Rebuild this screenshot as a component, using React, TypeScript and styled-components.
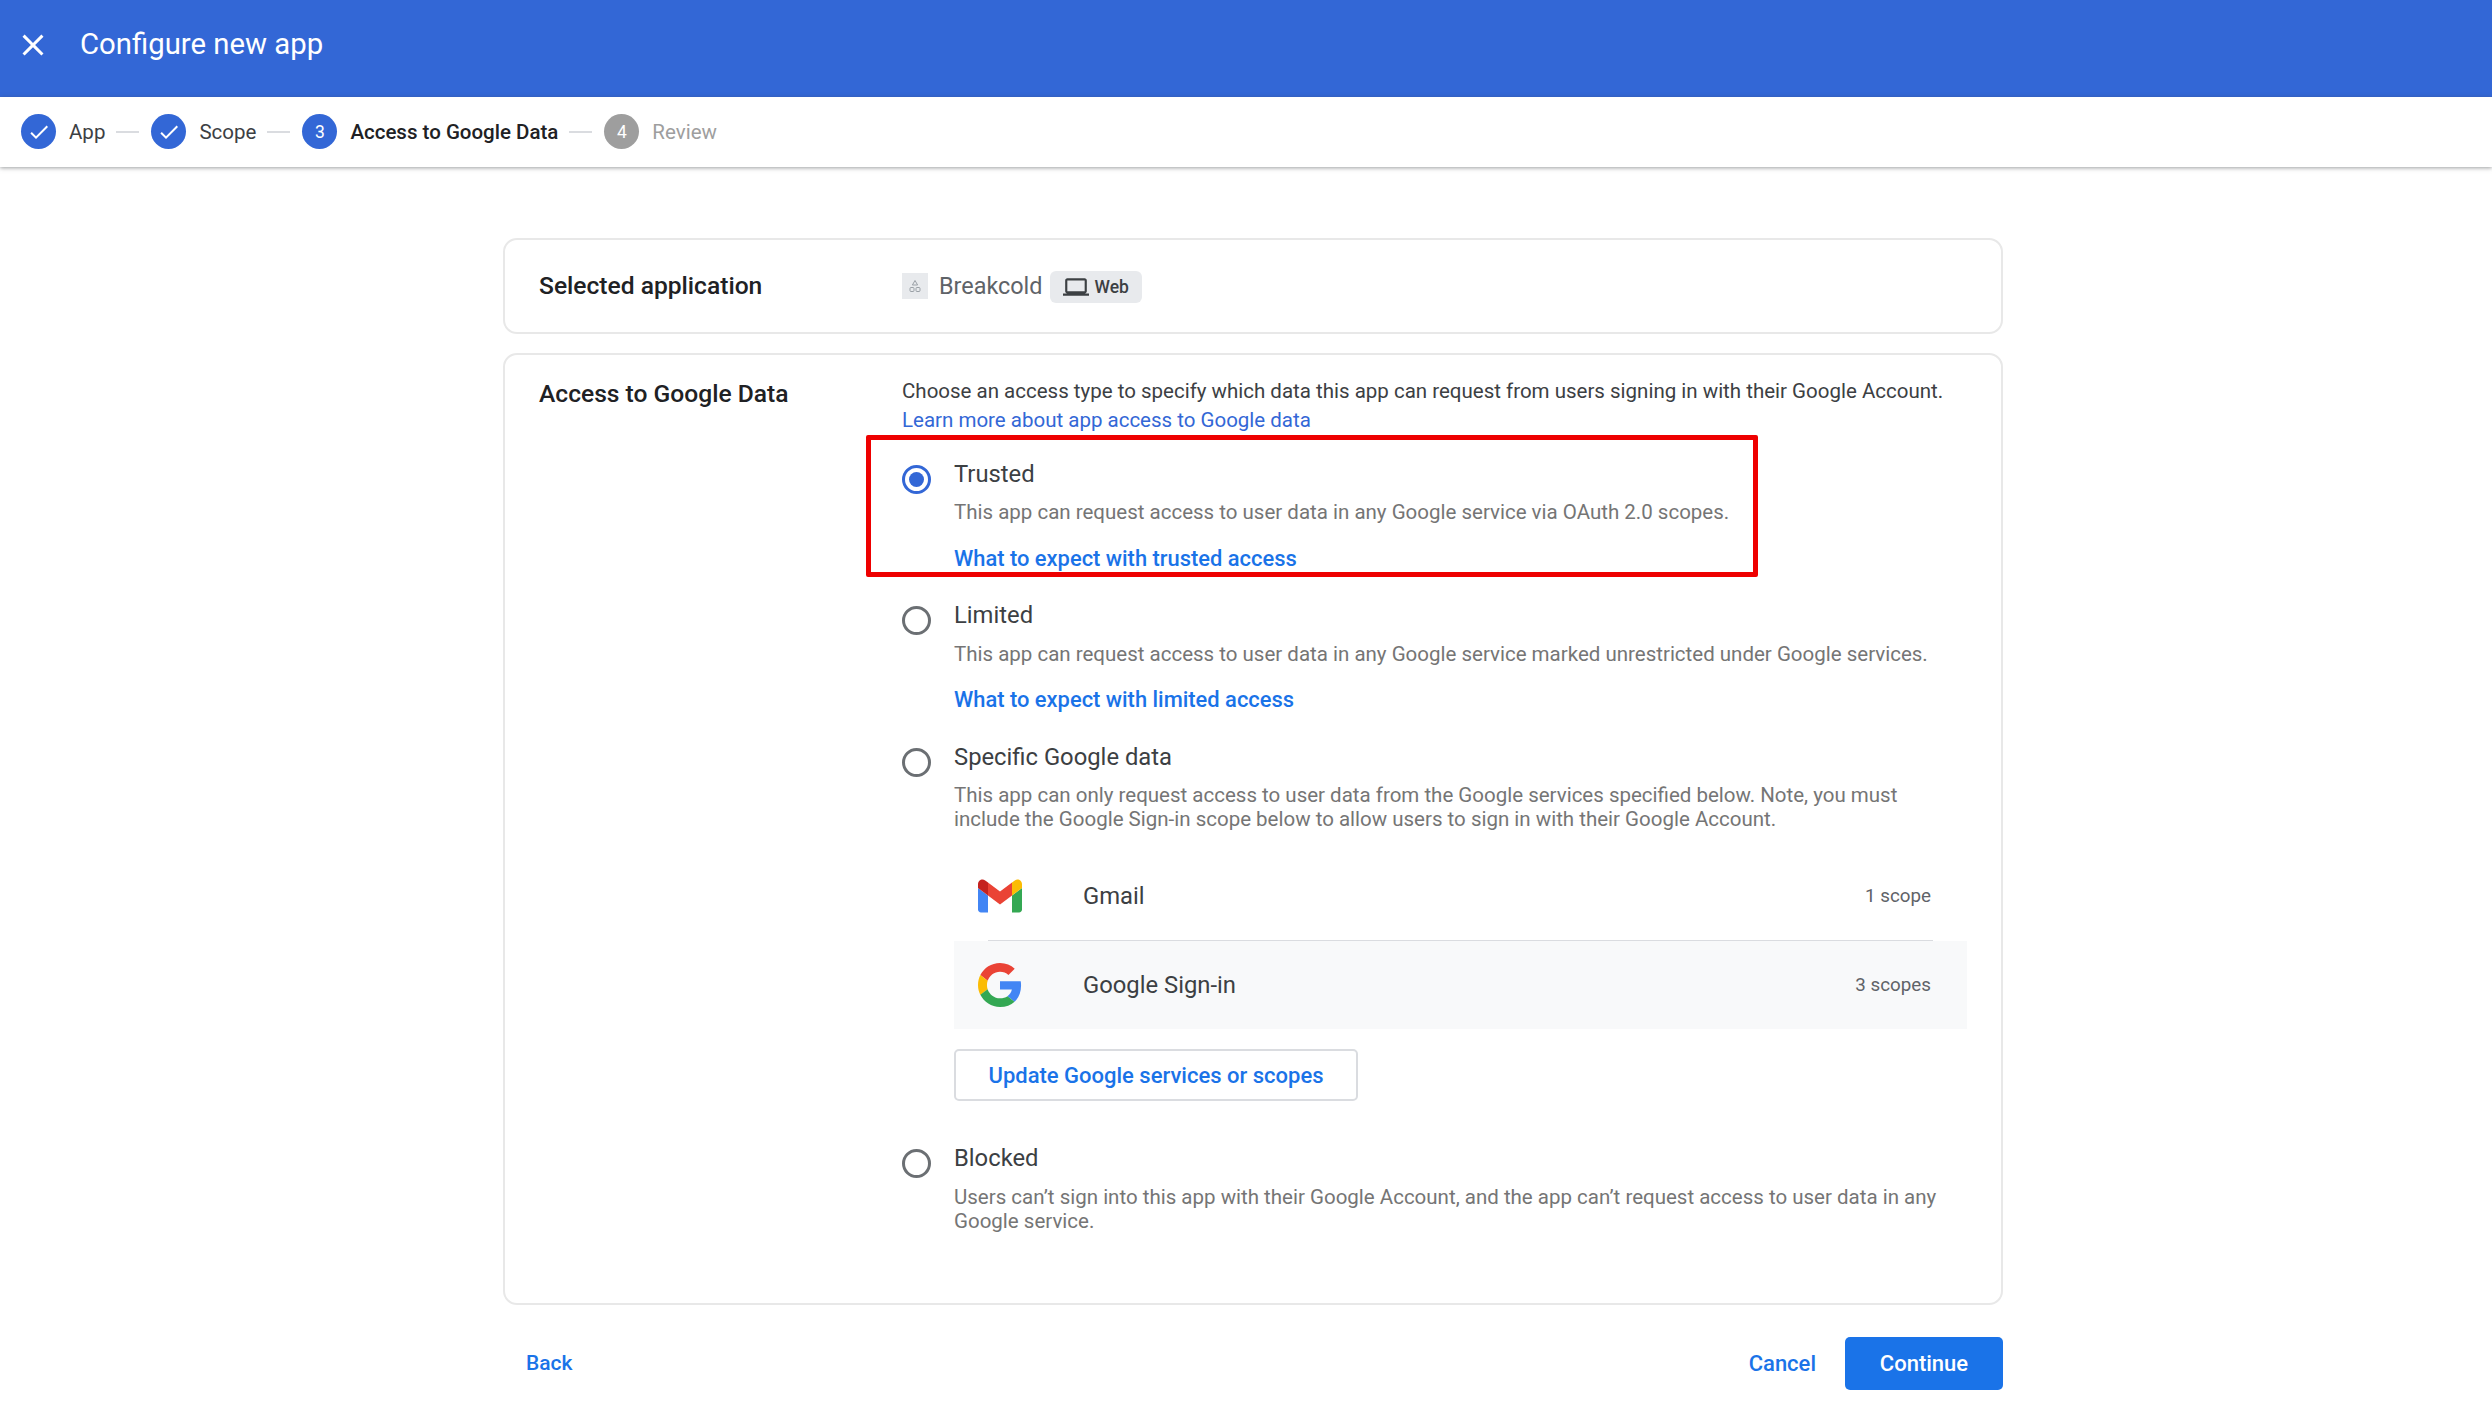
import React from 'react';
import styled, { createGlobalStyle } from 'styled-components';

const GlobalStyle = createGlobalStyle`
  html, body {
    margin: 0;
    background: #fff;
    font-family: Roboto, "Liberation Sans", sans-serif;
  }
  * { box-sizing: border-box; }
`;

const Page = styled.div`
  width: 2492px;
  height: 1408px;
  overflow: hidden;
  display: flex;
  flex-direction: column;
`;

const AppBar = styled.header`
  height: 97px;
  background: #3367d6;
  color: #fff;
  display: flex;
  align-items: flex-start;
  padding: 28px 0 0 15px;
  gap: 29px;
  flex: none;
`;

const CloseIcon = styled.svg`
  width: 36px;
  height: 32px;
  margin-top: -1px;
  fill: #fff;
`;

const Title = styled.h1`
  margin: 0;
  font-size: 29.3px;
  line-height: 32px;
  font-weight: 400;
`;

const Stepper = styled.nav`
  height: 70px;
  flex: none;
  display: flex;
  align-items: center;
  padding: 0 0 1px 21px;
  box-shadow: 0 1px 4px rgba(60, 64, 67, 0.5);
  position: relative;
`;

const Step = styled.div`
  display: flex;
  align-items: center;
  gap: 13px;
`;

const StepCircle = styled.span<{ $off?: boolean }>`
  width: 35px;
  height: 35px;
  border-radius: 50%;
  background: ${(p) => (p.$off ? '#9e9e9e' : '#3367d6')};
  color: #fff;
  display: flex;
  align-items: center;
  justify-content: center;
  font-size: 17.5px;
  svg {
    width: 24px;
    height: 24px;
    fill: #fff;
  }
`;

const StepLabel = styled.span<{ $state: 'done' | 'active' | 'off' }>`
  font-size: 20.5px;
  font-weight: ${(p) => (p.$state === 'active' ? 500 : 400)};
  color: ${(p) => (p.$state === 'off' ? '#9e9e9e' : p.$state === 'active' ? '#202124' : '#3c4043')};
`;

const StepDash = styled.span`
  width: 23px;
  height: 2px;
  margin: 0 12.5px 0 10.5px;
  background: #dadce0;
`;

const Main = styled.main`
  padding: 71px 0 0 503px;
  width: 2003px;
  display: flex;
  flex-direction: column;
`;

const Card = styled.section`
  width: 1500px;
  border: 2px solid #e8e8e8;
  border-radius: 14px;
  padding: 0 34px;
  display: grid;
  grid-template-columns: 363px 1fr;
`;

const AppCard = styled(Card)`
  height: 96px;
  align-items: center;
`;

const AccessCard = styled(Card)`
  margin-top: 19px;
  height: 952px;
  padding-top: 22px;
`;

const Label = styled.h2`
  margin: 0;
  font-size: 24.6px;
  line-height: 34px;
  font-weight: 500;
  color: #202124;
`;

const AppRow = styled.div`
  display: flex;
  align-items: center;
`;

const AppLogo = styled.svg`
  width: 26px;
  height: 26px;
  background: #e8eaed;
  margin-right: 11px;
`;

const AppName = styled.span`
  font-size: 23.4px;
  color: #5f6368;
`;

const Chip = styled.span`
  margin: 1px 0 0 7px;
  height: 32px;
  padding: 0 13px;
  border-radius: 6px;
  background: #e8eaed;
  display: flex;
  align-items: center;
  gap: 6px;
  font-size: 17.5px;
  font-weight: 500;
  color: #3c4043;
  svg {
    width: 26px;
    height: 26px;
    fill: #3c4043;
  }
`;

const Intro = styled.p`
  margin: 0 0 25.5px;
  font-size: 20.5px;
  line-height: 28.6px;
  color: #3c4043;
`;

const TextLink = styled.a`
  display: block;
  color: #1a73e8;
  text-decoration: none;
`;

const IntroLink = styled(TextLink)`
  color: #3367d6;
`;

const Option = styled.div`
  position: relative;
  display: grid;
  grid-template-columns: 52px 1fr;
  margin-bottom: 28.5px;
`;

const Radio = styled.span<{ $checked?: boolean }>`
  width: 29px;
  height: 29px;
  margin-top: 5px;
  border-radius: 50%;
  border: 3px solid ${(p) => (p.$checked ? '#3367d6' : '#6b6f73')};
  display: flex;
  align-items: center;
  justify-content: center;
  &::after {
    content: '';
    display: ${(p) => (p.$checked ? 'block' : 'none')};
    width: 15px;
    height: 15px;
    border-radius: 50%;
    background: #3367d6;
  }
`;

const OptionTitle = styled.div`
  font-size: 23.8px;
  line-height: 28px;
  color: #3c4043;
`;

const OptionText = styled.p`
  margin: 12.5px 0 0;
  font-size: 20.5px;
  line-height: 24px;
  color: #757575;
`;

const OptionLink = styled(TextLink)`
  margin-top: 20.5px;
  font-size: 21.9px;
  line-height: 28px;
  font-weight: 500;
`;

const Highlight = styled.div`
  position: absolute;
  left: -36px;
  top: -24.5px;
  width: 892px;
  height: 142px;
  border: 5px solid #ee0000;
  border-radius: 2px;
  pointer-events: none;
`;

const Services = styled.div`
  margin: 20.5px 0 20.5px;
`;

const ServiceRow = styled.div<{ $shaded?: boolean }>`
  height: 88px;
  display: grid;
  grid-template-columns: 105px 1fr auto;
  align-items: center;
  padding: 0 36px 0 24px;
  background: ${(p) => (p.$shaded ? '#f8f9fa' : 'transparent')};
`;

const ServiceIcon = styled.svg`
  width: 44px;
  height: 44px;
`;

const ServiceName = styled.span`
  font-size: 23.8px;
  color: #3c4043;
`;

const ServiceCount = styled.span`
  font-size: 18.8px;
  color: #5f6368;
`;

const ServiceDivider = styled.div`
  height: 1px;
  margin: 0 34px;
  background: #dadce0;
`;

const OutlineButton = styled.button`
  display: block;
  width: 404px;
  height: 52px;
  margin-bottom: 14.5px;
  padding: 0;
  background: #fff;
  border: 2px solid #dadce0;
  border-radius: 5px;
  color: #1a73e8;
  font: 500 22px Roboto, sans-serif;
`;

const Footer = styled.footer`
  margin-top: 31.5px;
  width: 1500px;
  display: flex;
  align-items: center;
  justify-content: space-between;
`;

const Actions = styled.div`
  display: flex;
  align-items: center;
  gap: 6px;
`;

const FlatButton = styled.button`
  height: 53px;
  padding: 0 23px;
  background: none;
  border: 0;
  border-radius: 5px;
  color: #1a73e8;
  font: 500 22px Roboto, sans-serif;
`;

const BackButton = styled(FlatButton)`
  font-size: 21px;
`;

const PrimaryButton = styled(FlatButton)`
  width: 158px;
  padding: 0;
  background: #1a73e8;
  color: #fff;
`;

const Check = () => (
  <svg viewBox="0 0 24 24">
    <path d="M9 16.2 4.8 12l-1.4 1.4L9 19 21 7l-1.4-1.4z" />
  </svg>
);

const GmailIcon = () => (
  <ServiceIcon viewBox="52 32 88 86">
    <path fill="#4285f4" d="M58 108h14V74L52 59v43c0 3.32 2.69 6 6 6" />
    <path fill="#34a853" d="M120 108h14c3.32 0 6-2.69 6-6V59l-20 15" />
    <path fill="#fbbc04" d="M120 48v26l20-15v-8c0-7.42-8.47-11.65-14.4-7.2" />
    <path fill="#ea4335" d="M72 74V48l24 18 24-18v26L96 92" />
    <path fill="#c5221f" d="M52 51v8l20 15V48l-5.6-4.2c-5.94-4.45-14.4-.22-14.4 7.2" />
  </ServiceIcon>
);

const GoogleIcon = () => (
  <ServiceIcon viewBox="0 0 48 48">
    <path fill="#EA4335" d="M24 9.5c3.54 0 6.71 1.22 9.21 3.6l6.85-6.85C35.9 2.38 30.47 0 24 0 14.62 0 6.51 5.38 2.56 13.22l7.98 6.19C12.43 13.72 17.74 9.5 24 9.5z" />
    <path fill="#4285F4" d="M46.98 24.55c0-1.57-.15-3.09-.38-4.55H24v9.02h12.94c-.58 2.96-2.26 5.48-4.78 7.18l7.73 6c4.51-4.18 7.09-10.36 7.09-17.65z" />
    <path fill="#FBBC05" d="M10.53 28.59c-.48-1.45-.76-2.99-.76-4.59s.27-3.14.76-4.59l-7.98-6.19C.92 16.46 0 20.12 0 24c0 3.88.92 7.54 2.56 10.78l7.97-6.19z" />
    <path fill="#34A853" d="M24 48c6.48 0 11.93-2.13 15.89-5.81l-7.73-6c-2.15 1.45-4.92 2.3-8.16 2.3-6.26 0-11.57-4.22-13.47-9.91l-7.98 6.19C6.51 42.62 14.62 48 24 48z" />
  </ServiceIcon>
);

export default function App() {
  return (
    <Page>
      <GlobalStyle />
      <AppBar>
        <CloseIcon viewBox="0 0 24 21.3" preserveAspectRatio="none">
          <path d="M19 6.41 17.59 5 12 10.59 6.41 5 5 6.41 10.59 12 5 17.59 6.41 19 12 13.41 17.59 19 19 17.59 13.41 12z" />
        </CloseIcon>
        <Title>Configure new app</Title>
      </AppBar>
      <Stepper>
        <Step>
          <StepCircle><Check /></StepCircle>
          <StepLabel $state="done">App</StepLabel>
        </Step>
        <StepDash />
        <Step>
          <StepCircle><Check /></StepCircle>
          <StepLabel $state="done">Scope</StepLabel>
        </Step>
        <StepDash />
        <Step>
          <StepCircle>3</StepCircle>
          <StepLabel $state="active">Access to Google Data</StepLabel>
        </Step>
        <StepDash />
        <Step>
          <StepCircle $off>4</StepCircle>
          <StepLabel $state="off">Review</StepLabel>
        </Step>
      </Stepper>
      <Main>
        <AppCard>
          <Label>Selected application</Label>
          <AppRow>
            <AppLogo viewBox="0 0 26 26">
              <path d="M13 7.5l2.6 4.5h-5.2z" fill="none" stroke="#9aa0a6" strokeWidth="1" />
              <rect x="8" y="14.5" width="4" height="4" rx="1" fill="none" stroke="#9aa0a6" strokeWidth="1" />
              <rect x="14" y="14.5" width="4" height="4" rx="1" fill="none" stroke="#9aa0a6" strokeWidth="1" />
            </AppLogo>
            <AppName>Breakcold</AppName>
            <Chip>
              <svg viewBox="0 0 24 24">
                <path d="M20 18c1.1 0 1.99-.9 1.99-2L22 6c0-1.1-.9-2-2-2H4c-1.1 0-2 .9-2 2v10c0 1.1.9 2 2 2H0v2h24v-2h-4zM4 6h16v10H4V6z" />
              </svg>
              Web
            </Chip>
          </AppRow>
        </AppCard>
        <AccessCard>
          <Label>Access to Google Data</Label>
          <div>
            <Intro>
              Choose an access type to specify which data this app can request from users signing in with their Google Account.
              <IntroLink>Learn more about app access to Google data</IntroLink>
            </Intro>
            <Option>
              <Highlight />
              <Radio $checked />
              <div>
                <OptionTitle>Trusted</OptionTitle>
                <OptionText>This app can request access to user data in any Google service via OAuth 2.0 scopes.</OptionText>
                <OptionLink>What to expect with trusted access</OptionLink>
              </div>
            </Option>
            <Option>
              <Radio />
              <div>
                <OptionTitle>Limited</OptionTitle>
                <OptionText>This app can request access to user data in any Google service marked unrestricted under Google services.</OptionText>
                <OptionLink>What to expect with limited access</OptionLink>
              </div>
            </Option>
            <Option>
              <Radio />
              <div>
                <OptionTitle>Specific Google data</OptionTitle>
                <OptionText>
                  This app can only request access to user data from the Google services specified below. Note, you must
                  <br />
                  include the Google Sign-in scope below to allow users to sign in with their Google Account.
                </OptionText>
                <Services>
                  <ServiceRow>
                    <GmailIcon />
                    <ServiceName>Gmail</ServiceName>
                    <ServiceCount>1 scope</ServiceCount>
                  </ServiceRow>
                  <ServiceDivider />
                  <ServiceRow $shaded>
                    <GoogleIcon />
                    <ServiceName>Google Sign-in</ServiceName>
                    <ServiceCount>3 scopes</ServiceCount>
                  </ServiceRow>
                </Services>
                <OutlineButton>Update Google services or scopes</OutlineButton>
              </div>
            </Option>
            <Option>
              <Radio />
              <div>
                <OptionTitle>Blocked</OptionTitle>
                <OptionText>
                  Users can’t sign into this app with their Google Account, and the app can’t request access to user data in any
                  <br />
                  Google service.
                </OptionText>
              </div>
            </Option>
          </div>
        </AccessCard>
        <Footer>
          <BackButton>Back</BackButton>
          <Actions>
            <FlatButton>Cancel</FlatButton>
            <PrimaryButton>Continue</PrimaryButton>
          </Actions>
        </Footer>
      </Main>
    </Page>
  );
}
